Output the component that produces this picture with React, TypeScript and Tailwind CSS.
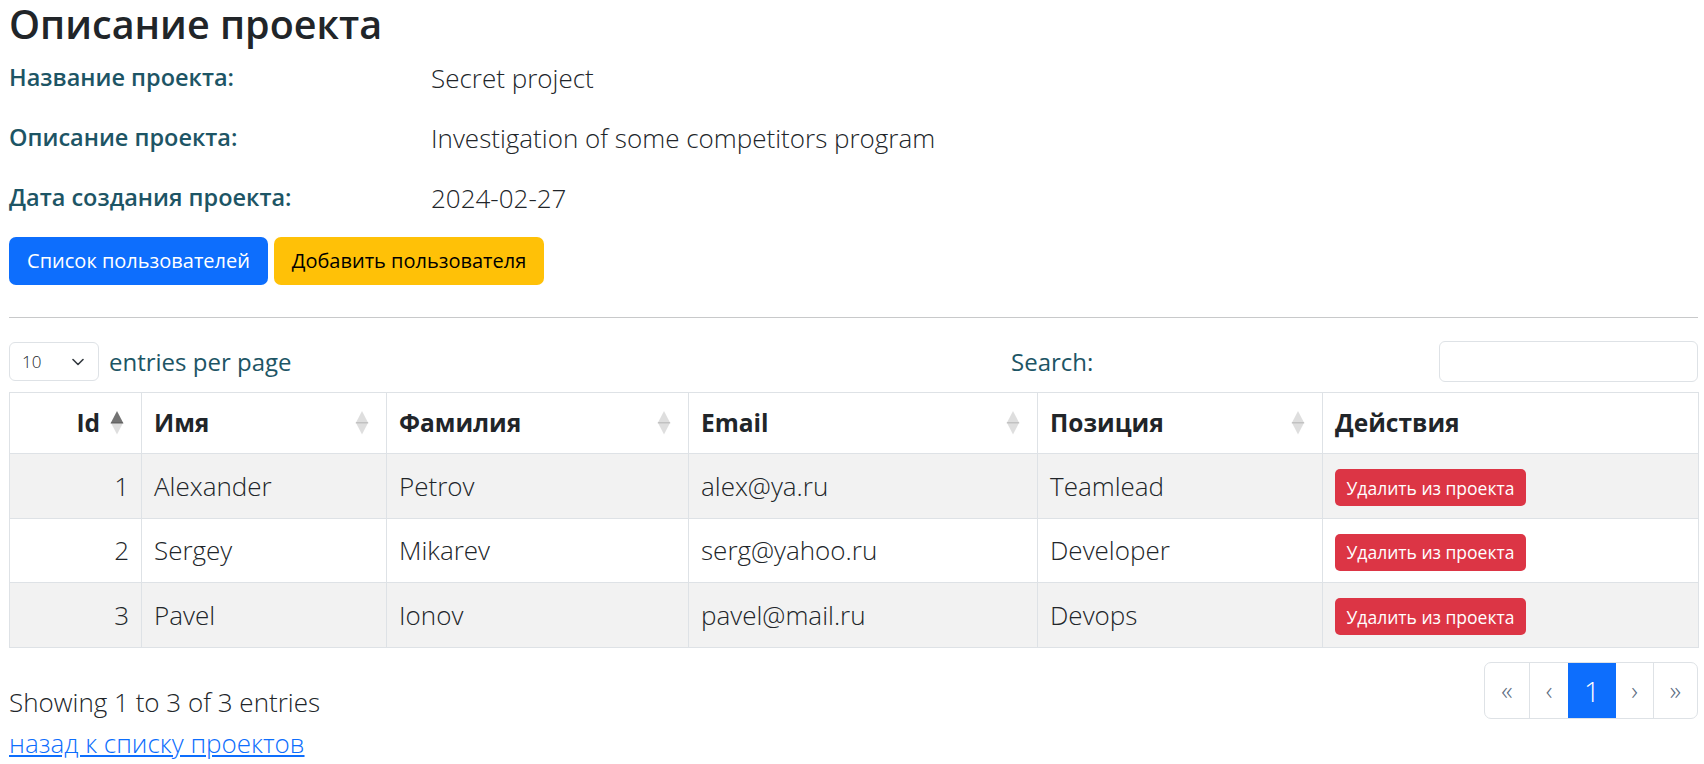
import React from 'react';

type Member = { id: number; name: string; surname: string; email: string; position: string };

const members: Member[] = [
  { id: 1, name: 'Alexander', surname: 'Petrov', email: 'alex@ya.ru', position: 'Teamlead' },
  { id: 2, name: 'Sergey', surname: 'Mikarev', email: 'serg@yahoo.ru', position: 'Developer' },
  { id: 3, name: 'Pavel', surname: 'Ionov', email: 'pavel@mail.ru', position: 'Devops' },
];

const SortIcon: React.FC<{ active?: boolean }> = ({ active }) => (
  <svg width="14" height="26" viewBox="0 0 14 26" className="shrink-0">
    <path d="M7 1 L13.5 13.5 L0.5 13.5 Z" fill="#000" fillOpacity={active ? 0.55 : 0.13} />
    <path d="M0.5 12 L13.5 12 L7 24.5 Z" fill="#000" fillOpacity={0.13} />
  </svg>
);

const InfoRow: React.FC<{ label: string; value: string }> = ({ label, value }) => (
  <div className="flex h-[60px] items-center">
    <div className="w-[422px] text-[23.5px] font-semibold text-[#1d5565]">{label}</div>
    <div className="text-[26px] font-light text-[#212529]">{value}</div>
  </div>
);

const headers = ['Имя', 'Фамилия', 'Email', 'Позиция'];

export default function App() {
  return (
    <div className="min-h-screen bg-white pl-[9px] font-['Open_Sans',sans-serif] text-[#212529]">
      <div className="w-[1689px]">
        <h1 className="text-[39.5px] leading-[48px] font-semibold">Описание проекта</h1>

        <InfoRow label="Название проекта:" value="Secret project" />
        <InfoRow label="Описание проекта:" value="Investigation of some competitors program" />
        <InfoRow label="Дата создания проекта:" value="2024-02-27" />

        <div className="mt-[9px] flex gap-[6px]">
          <button className="h-[48px] w-[259px] whitespace-nowrap rounded-[7px] bg-[#0d6efd] text-[20px] text-white">
            Список пользователей
          </button>
          <button className="h-[48px] w-[270px] whitespace-nowrap rounded-[7px] bg-[#ffc107] text-[20px] text-black">
            Добавить пользователя
          </button>
        </div>

        <hr className="mt-[32px] border-0 border-t border-[#c8c9ca]" />

        <div className="mt-[23px] flex h-[41px] items-center">
          <div className="flex flex-1 items-center gap-[10px]">
            <div className="flex h-[39px] w-[90px] items-center justify-between rounded-[6px] border border-[#dee2e6] pl-[12px] pr-[14px] text-[17px] font-light">
              <span>10</span>
              <svg width="12" height="8" viewBox="0 0 12 8">
                <path d="M1 1.5 L6 6.5 L11 1.5" fill="none" stroke="#343a40" strokeWidth="1.6" strokeLinecap="round" strokeLinejoin="round" />
              </svg>
            </div>
            <span className="text-[24px] text-[#1d5565]">entries per page</span>
          </div>
          <label className="w-[428px] text-[24px] text-[#1d5565]">Search:</label>
          <div className="h-[41px] w-[259px] rounded-[6px] border border-[#dee2e6]" />
        </div>

        <table className="mt-[10px] w-full table-fixed border-collapse">
          <colgroup>
            <col className="w-[132px]" />
            <col className="w-[245px]" />
            <col className="w-[302px]" />
            <col className="w-[349px]" />
            <col className="w-[285px]" />
            <col className="w-[376px]" />
          </colgroup>
          <thead>
            <tr className="h-[61px] text-[24.5px]">
              <th className="border border-[#dee2e6] pl-3 pr-[17px] font-bold">
                <div className="flex items-center justify-end gap-[10px]">
                  <span>Id</span>
                  <SortIcon active />
                </div>
              </th>
              {headers.map(h => (
                <th key={h} className="border border-[#dee2e6] pl-3 pr-[17px] text-left font-bold">
                  <div className="flex items-center justify-between">
                    <span>{h}</span>
                    <SortIcon />
                  </div>
                </th>
              ))}
              <th className="border border-[#dee2e6] px-3 text-left font-bold">Действия</th>
            </tr>
          </thead>
          <tbody>
            {members.map((m, i) => (
              <tr key={m.id} className={`${i === 1 ? 'h-[64px] bg-white' : 'h-[65px] bg-[#f2f2f2]'} text-[26px] font-light`}>
                <td className="border border-[#dee2e6] pr-3 text-right">{m.id}</td>
                <td className="border border-[#dee2e6] px-3">{m.name}</td>
                <td className="border border-[#dee2e6] px-3">{m.surname}</td>
                <td className="border border-[#dee2e6] px-3">{m.email}</td>
                <td className="border border-[#dee2e6] px-3">{m.position}</td>
                <td className="border border-[#dee2e6] px-3">
                  <button className="h-[37px] w-[191px] whitespace-nowrap rounded-[5px] bg-[#dc3545] text-[17.5px] font-normal text-white">
                    Удалить из проекта
                  </button>
                </td>
              </tr>
            ))}
          </tbody>
        </table>

        <div className="mt-[14px] flex items-start justify-between">
          <div className="mt-[25px] text-[26px] leading-[30px] font-light">Showing 1 to 3 of 3 entries</div>
          <div className="flex h-[57px] overflow-hidden rounded-[7px] border border-[#dee2e6] text-[26px] font-light">
            <span className="flex w-[44px] items-center justify-center text-[#5a6b80]">«</span>
            <span className="flex w-[39px] items-center justify-center border-l border-[#dee2e6] text-[#5a6b80]">‹</span>
            <span className="flex w-[48px] items-center justify-center bg-[#0d6efd] text-[28px] text-white">1</span>
            <span className="flex w-[38px] items-center justify-center border-r border-[#dee2e6] text-[#5a6b80]">›</span>
            <span className="flex w-[43px] items-center justify-center text-[#5a6b80]">»</span>
          </div>
        </div>

        <a href="#" className="mt-[9px] block text-[26px] leading-[30px] font-light text-[#0d6efd] underline">
          назад к списку проектов
        </a>
      </div>
    </div>
  );
}
